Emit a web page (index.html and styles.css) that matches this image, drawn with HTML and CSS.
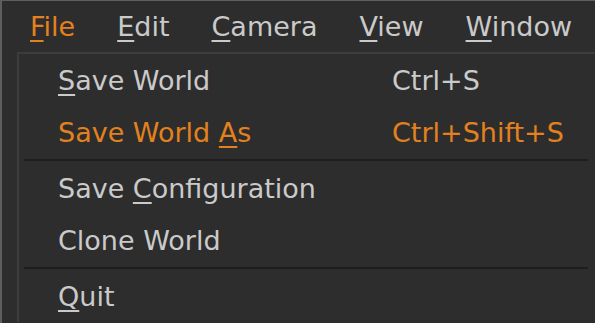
FILE: index.html
```html
<!DOCTYPE html>
<html lang="en">
<head>
  <meta charset="UTF-8">
  <title>File menu</title>
  <link rel="stylesheet" href="styles.css">
</head>
<body>
  <div class="window">
    <div class="menubar">
      <div class="menu-title active"><u>F</u>ile</div>
      <div class="menu-title"><u>E</u>dit</div>
      <div class="menu-title"><u>C</u>amera</div>
      <div class="menu-title"><u>V</u>iew</div>
      <div class="menu-title"><u>W</u>indow</div>
    </div>

    <div class="popup">
      <div class="item">
        <span><u>S</u>ave World</span>
        <span class="shortcut">Ctrl+S</span>
      </div>
      <div class="item hover">
        <span>Save World <u>A</u>s</span>
        <span class="shortcut">Ctrl+Shift+S</span>
      </div>
      <div class="sep"></div>
      <div class="item">
        <span>Save <u>C</u>onfiguration</span>
        <span class="shortcut"></span>
      </div>
      <div class="item">
        <span>Clone World</span>
        <span class="shortcut"></span>
      </div>
      <div class="sep"></div>
      <div class="item">
        <span><u>Q</u>uit</span>
        <span class="shortcut"></span>
      </div>
    </div>
  </div>
</body>
</html>
```

FILE: styles.css
```css
body {
  margin: 0;
  background: #2d2d2d;
  font-family: 'DejaVu Sans', sans-serif;
  font-size: 27px;
  color: #cacaca;
  overflow: hidden;
}

u {
  text-decoration: underline;
  text-decoration-thickness: 2px;
  text-underline-offset: 4px;
}

.window {
  width: 593px;
  height: 322px;
  border-left: 2px solid #5e5e5e;
  border-top: 1px solid #5e5e5e;
}

.menubar {
  display: flex;
  align-items: center;
  height: 51px;
  padding-left: 7px;
}

.menu-title {
  padding: 0 21px;
  line-height: 30px;
}

.active {
  color: #e3811e;
}

.popup {
  margin-left: 15px;
  border-top: 2px solid #3d3d3d;
  border-left: 2px solid #3d3d3d;
}

.item {
  display: grid;
  grid-template-columns: 334px auto;
  align-items: center;
  height: 52px;
  padding-left: 39px;
}

.item.hover {
  color: #e3811e;
}

.sep {
  height: 2px;
  margin: 1px 0 1px 5px;
  width: 564px;
  background: #1e1e1e;
}
```
